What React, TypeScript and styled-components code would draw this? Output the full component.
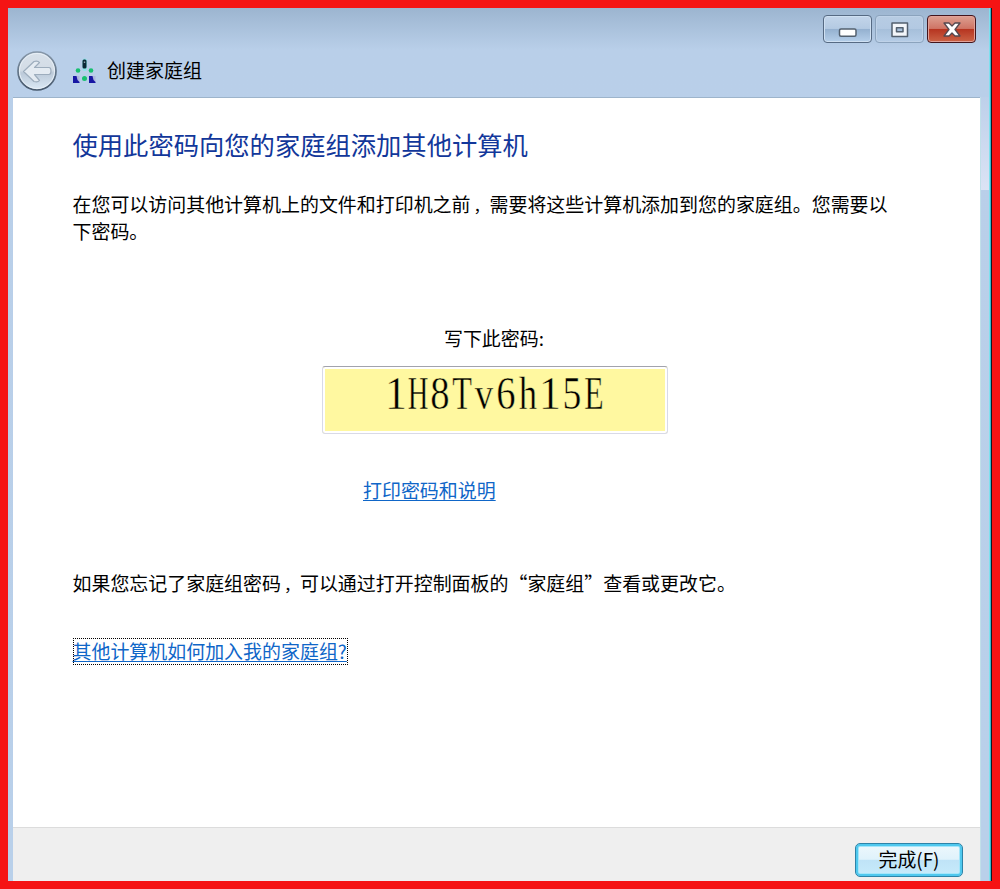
import React from 'react';
import styled, { createGlobalStyle } from 'styled-components';

const Global = createGlobalStyle`
  * { box-sizing: border-box; }
  body { margin: 0; font-family: "Noto Sans CJK SC", sans-serif; color: #000; }
`;

const Backdrop = styled.div`
  width: 1000px;
  height: 889px;
  padding: 8px;
  background: #f51414;
`;

const Window = styled.div`
  width: 984px;
  height: 873px;
  display: flex;
  flex-direction: column;
  border-right: 1px solid #101820;
  box-shadow: inset -1px 0 #35b9cc, inset -2px 0 #7fe0ee;
  background:
    linear-gradient(#bdd0ea, #dbe3f5) 972px 89px / 9px 93px no-repeat,
    linear-gradient(#9cb5d0 0, #b9cfe9 42px, #b9d0ea 100%);
`;

const Header = styled.header`
  height: 89px;
  flex: none;
  display: flex;
  flex-direction: column;
`;

const Controls = styled.div`
  display: flex;
  flex: none;
  justify-content: flex-end;
  gap: 3px;
  height: 42px;
  padding: 7px 15px 0 0;
`;

const ControlButton = styled.button<{ $kind: 'plain' | 'faded' | 'close' }>`
  width: 49px;
  height: 28px;
  padding: 1px 0 0;
  display: flex;
  align-items: center;
  justify-content: center;
  border-radius: 4px;
  border: 1px solid ${p => (p.$kind === 'close' ? '#43151c' : p.$kind === 'faded' ? '#8ba3bd' : '#566a83')};
  box-shadow: inset 0 0 0 1px ${p => (p.$kind === 'close' ? '#e2a198' : p.$kind === 'faded' ? '#bfd2e8' : '#cfe0f2')};
  background: ${p =>
    p.$kind === 'close'
      ? 'linear-gradient(#dda092 0, #cf7565 48%, #b63420 50%, #cb6346 100%)'
      : p.$kind === 'faded'
        ? 'linear-gradient(#b7cce3 0, #b3c9e2 48%, #a6bfda 50%, #b6cde7 100%)'
        : 'linear-gradient(#c3d5ea 0, #b4cae2 48%, #94b0cf 50%, #b5cfea 100%)'};
`;

const Caption = styled.div`
  display: flex;
  flex: none;
  align-items: center;
  height: 42px;
  padding-left: 8px;
`;

const CaptionText = styled.h1`
  margin: -2px 0 0 10px;
  font-size: 19px;
  line-height: 28px;
  font-weight: 400;
`;

const NetworkIcon = styled.svg`
  margin-left: 14px;
`;

const Client = styled.main`
  width: 967px;
  margin-left: 5px;
  flex: 1;
  display: flex;
  flex-direction: column;
  border-top: 1px solid #9db4cb;
  box-shadow: 1px 0 #c2dfe9;
  background: #fff;
`;

const Content = styled.section`
  flex: 1;
  padding: 27px 59.5px 0;
  font-size: 18.97px;
  line-height: 27px;
`;

const Heading = styled.h2`
  margin: 0;
  font-size: 25.3px;
  line-height: 38px;
  font-weight: 400;
  color: #12379a;
`;

const Paragraph = styled.p<{ $top: number }>`
  margin: ${p => p.$top}px 0 0;
  white-space: nowrap;
`;

const Comma = styled.span`
  margin-left: 2.97px;
  font-size: 16px;
  line-height: 0;
`;

const PasswordGroup = styled.div`
  width: 346px;
  margin: 80px 0 0 249.5px;
  display: flex;
  flex-direction: column;
  align-items: center;
`;

const PasswordLabel = styled.span`
  margin-right: 2px;
`;

const PasswordBox = styled.div`
  width: 346px;
  height: 68px;
  margin-top: 15px;
  padding-top: 2px;
  display: flex;
  justify-content: center;
  border: 1px solid #d9dae6;
  border-top-color: #a2a3ac;
  border-radius: 3px;
  box-shadow: inset 0 0 0 2px #fff;
  background: #fff8a0;
`;

const Glyph = styled.span<{ $narrow: number }>`
  width: 22px;
  display: flex;
  justify-content: center;
  font: 46px/50px "Liberation Serif", serif;
  -webkit-text-stroke: 0.5px #fff8a0;
  transform: scaleX(${p => p.$narrow});
`;

const Link = styled.a`
  color: #0f66c8;
  text-decoration: underline;
  text-decoration-thickness: 1px;
  text-underline-offset: 2px;
`;

const PrintRow = styled.div`
  margin: 42px 0 0 290.5px;
`;

const HelpRow = styled.div`
  display: flex;
  margin-top: 42px;
`;

const FocusLink = styled(Link)`
  height: 27px;
  line-height: 25px;
  padding-right: 1px;
  outline: 1px dotted #000;
  outline-offset: -1px;
`;

const Footer = styled.footer`
  height: 54px;
  padding: 15px 17px 0 0;
  display: flex;
  justify-content: flex-end;
  border-top: 1px solid #dcdcdc;
  background: #efefef;
`;

const FinishButton = styled.button`
  width: 108px;
  height: 34px;
  padding: 0 0 2px;
  border: 1px solid #2d83a8;
  border-radius: 5px;
  box-shadow: inset 0 0 0 2px #4fc8ee, inset 0 0 0 3px #a5e6fa;
  background: linear-gradient(#eef8fc 0, #dff2fb 48%, #bfe3f7 50%, #c8ebfb 100%);
  font: 18.9px/26px "Noto Sans CJK SC", sans-serif;
  color: #000;
`;

const WIDTHS: Record<string, number> = { H: 0.62, T: 0.7, E: 0.69, v: 0.8, h: 0.8, '8': 0.84, '6': 0.84, '5': 0.82, '1': 0.95 };

export default function App() {
  return (
    <>
      <Global />
      <Backdrop>
        <Window>
          <Header>
            <Controls>
              <ControlButton $kind="plain" aria-label="最小化">
                <svg width="20" height="14" viewBox="0 0 20 14"><rect x="1.5" y="6" width="16.5" height="7.2" rx="1.5" fill="#fff" stroke="#53606f" strokeWidth="1.5" /></svg>
              </ControlButton>
              <ControlButton $kind="faded" aria-label="最大化">
                <svg width="18" height="16" viewBox="0 0 18 16"><path d="M1 1h15.500v13.500H1zM5.500 5.700H12v4H5.500z" fillRule="evenodd" fill="#f3f6fa" stroke="#53606f" strokeWidth="1.5" strokeLinejoin="round" /></svg>
              </ControlButton>
              <ControlButton $kind="close" aria-label="关闭">
                <svg width="18" height="15" viewBox="0 0 18 15"><path d="M1 1h5l3 3 3-3h5l-5 6.500L17 14h-5l-3-3-3 3H1l5-6.500z" fill="#fff" stroke="#54484f" strokeWidth="1.300" strokeLinejoin="round" /></svg>
              </ControlButton>
            </Controls>
            <Caption>
              <svg width="42" height="42" viewBox="0 0 42 42">
                <defs>
                  <linearGradient id="disc" x1="0" y1="0" x2="0" y2="1"><stop offset="0" stopColor="#d8e1ea" /><stop offset=".48" stopColor="#d3dce6" /><stop offset=".55" stopColor="#bccad9" /><stop offset="1" stopColor="#dceaf6" /></linearGradient>
                  <linearGradient id="ring" x1="0" y1="0" x2="0" y2="1"><stop offset="0" stopColor="#8697a9" /><stop offset="1" stopColor="#46586c" /></linearGradient>
                </defs>
                <circle cx="21" cy="21" r="19" fill="url(#disc)" stroke="url(#ring)" strokeWidth="1.700" />
                <circle cx="21" cy="21" r="17.500" fill="none" stroke="#e8f0f7" strokeWidth="1" />
                <path d="M7.500 21.500 18 11.500q4-1 5.500 1l-5 5H33q2 0 2 3.500t-2 3.500H18.500l5 6q-1.500 2-5.500 1z" fill="#e4ebf2" stroke="#9dadbd" strokeWidth="1.200" strokeLinejoin="round" />
              </svg>
              <NetworkIcon width="25" height="26" viewBox="0 0 25 26">
                <rect x="10.500" y="0.500" width="4.500" height="12.500" rx="2" fill="#8fe3e8" />
                <rect x="10.500" y="1.500" width="4" height="9" rx="1.500" fill="#0c2836" />
                <rect x="11.800" y="3.500" width="1.400" height="1.500" fill="#8ba7ad" />
                <circle cx="6" cy="12.500" r="2.300" fill="#18c070" /><circle cx="19" cy="12.500" r="2.300" fill="#18c070" /><circle cx="12.500" cy="20.500" r="2.500" fill="#18c070" />
                <path d="M1 18h6.500v7H1zM17 18h6.500v7H17z" fill="#aeb6dc" />
                <path d="M1 18h3.500l1 4 2 2v1H1zM17 18h3.500l1 4 2 2v1H17z" fill="#1717a3" />
              </NetworkIcon>
              <CaptionText>创建家庭组</CaptionText>
            </Caption>
          </Header>
          <Client>
            <Content>
              <Heading>使用此密码向您的家庭组添加其他计算机</Heading>
              <Paragraph $top={27}>在您可以访问其他计算机上的文件和打印机之前<Comma>，</Comma>需要将这些计算机添加到您的家庭组。您需要以<br />下密码。</Paragraph>
              <PasswordGroup>
                <PasswordLabel>写下此密码:</PasswordLabel>
                <PasswordBox>
                  {[...'1H8Tv6h15E'].map((c, i) => <Glyph key={i} $narrow={WIDTHS[c]}>{c}</Glyph>)}
                </PasswordBox>
              </PasswordGroup>
              <PrintRow><Link>打印密码和说明</Link></PrintRow>
              <Paragraph $top={66}>如果您忘记了家庭组密码<Comma>，</Comma>可以通过打开控制面板的“家庭组”查看或更改它。</Paragraph>
              <HelpRow><FocusLink>其他计算机如何加入我的家庭组?</FocusLink></HelpRow>
            </Content>
            <Footer><FinishButton>完成(F)</FinishButton></Footer>
          </Client>
        </Window>
      </Backdrop>
    </>
  );
}
